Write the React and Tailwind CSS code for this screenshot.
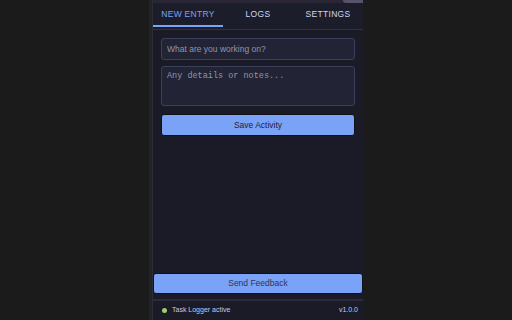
import { useState } from 'react';

const tabs = ['New Entry', 'Logs', 'Settings'];

export default function App() {
  const [active, setActive] = useState(0);

  return (
    <div className="w-[512px] h-[320px] bg-[#1b1b1b] flex overflow-hidden" style={{ fontFamily: '"Liberation Sans", Arial, sans-serif' }}>
      <div className="w-[149px] shrink-0" />
      <div className="w-[4px] shrink-0 bg-[#222224] border-r border-[#2c2d36]" />

      {/* Popup */}
      <div className="w-[210px] shrink-0 h-full flex flex-col bg-[#1a1b26]">
        {/* Top sliver of header */}
        <div className="h-[3px] bg-[#2a2636] flex justify-end">
          <div className="w-[20px] h-[3px] rounded-bl-[3px] bg-[#57536a]" />
        </div>

        {/* Tabs */}
        <div className="flex h-[27px] pb-[2px] border-b border-[#2f3247] bg-[#1c1d2b]">
          {tabs.map((t, i) => (
            <button
              key={t}
              onClick={() => setActive(i)}
              className={`flex-1 flex items-center justify-center uppercase text-[8.5px] font-normal tracking-[0.3px] border-b-2 ${
                i === active ? 'text-[#7aa2f7] border-[#7aa2f7]' : 'text-[#d0d6f0] border-transparent'
              }`}
            >
              {t}
            </button>
          ))}
        </div>

        {/* Form */}
        <div className="flex-1 flex flex-col p-2">
          <input
            placeholder="What are you working on?"
            className="h-[22px] w-full rounded-[3px] bg-[#222436] border border-[#3b3f5c] px-[5px] text-[8.5px] text-[#c0caf5] placeholder:text-[#8f94ad] outline-none"
          />
          <textarea
            placeholder="Any details or notes..."
            className="mt-[6px] h-[40px] w-full resize-none rounded-[3px] bg-[#222436] border border-[#3b3f5c] px-[5px] py-[4px] text-[8.5px] leading-[11px] text-[#c0caf5] placeholder:text-[#8f94ad] outline-none"
            style={{ fontFamily: '"Liberation Mono", "DejaVu Sans Mono", monospace' }}
          />
          <button className="mt-[8px] h-[22px] w-full rounded-[3px] bg-[#7aa2f7] border border-[#0f1018] text-[8.5px] text-[#1f2335]">
            Save Activity
          </button>
        </div>

        <button className="h-[21px] rounded-[3px] bg-[#7aa2f7] border border-[#0f1018] text-[8.5px] text-[#2f3550]">
          Send Feedback
        </button>

        {/* Footer */}
        <div className="mt-[5px] h-[21px] border-t-2 border-[#2a2c3e] flex items-center justify-between pl-[9px] pr-[5px]">
          <div className="flex items-center gap-[5px]">
            <span className="w-[5px] h-[5px] rounded-full bg-[#9ece6a]" />
            <span className="text-[7px] text-[#c0caf5]">Task Logger active</span>
          </div>
          <span className="text-[7px] text-[#c0caf5]">v1.0.0</span>
        </div>
      </div>
    </div>
  );
}
